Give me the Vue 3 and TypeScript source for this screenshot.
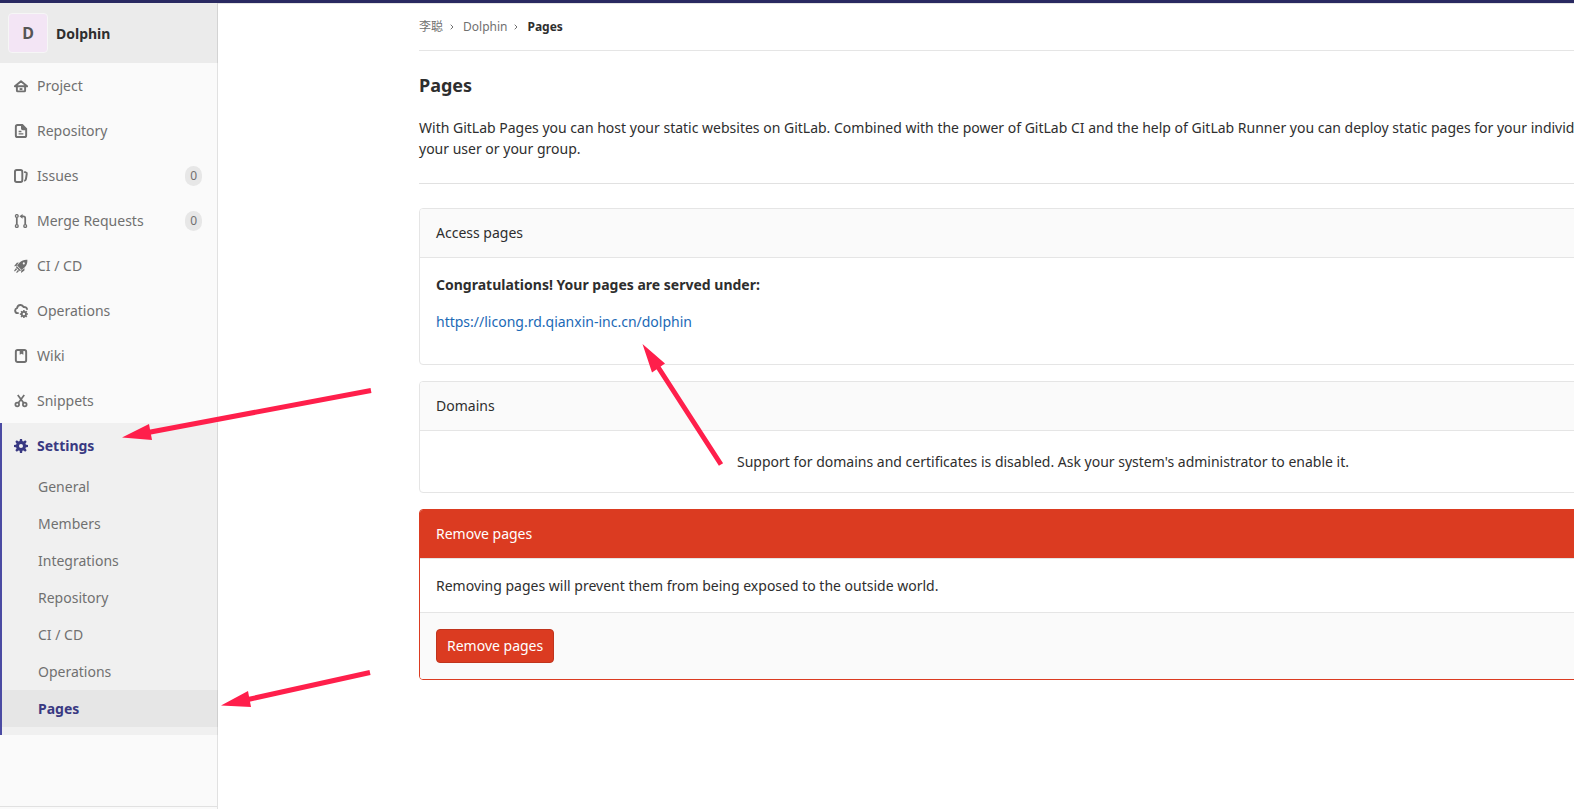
<script setup lang="ts">
interface NavItem {
  label: string
  icon: string
  count?: number
}

const navItems: NavItem[] = [
  { label: 'Project', icon: 'home' },
  { label: 'Repository', icon: 'doc' },
  { label: 'Issues', icon: 'issues', count: 0 },
  { label: 'Merge Requests', icon: 'merge', count: 0 },
  { label: 'CI / CD', icon: 'rocket' },
  { label: 'Operations', icon: 'cloud' },
  { label: 'Wiki', icon: 'book' },
  { label: 'Snippets', icon: 'scissors' },
]

const settingsItems: string[] = [
  'General',
  'Members',
  'Integrations',
  'Repository',
  'CI / CD',
  'Operations',
  'Pages',
]
const currentItem = 'Pages'
const teeth: number[] = [0, 45, 90, 135, 180, 225, 270, 315]
</script>

<template>
  <div class="app">
    <div class="topbar"></div>
    <div class="layout">
      <aside class="sidebar">
        <a class="project" href="#">
          <span class="avatar">D</span>
          <span>Dolphin</span>
        </a>
        <nav class="nav">
          <a v-for="item in navItems" :key="item.label" class="nav-link" href="#">
            <svg class="icon" viewBox="0 0 16 16" aria-hidden="true">
              <g v-if="item.icon === 'home'" class="line">
                <path d="M1 8.300 8 2.500l7 5.800H1z" />
                <path d="M3.300 8.500v4.600c0 .6.400 1 1 1h7.400c.6 0 1-.4 1-1V8.500" />
                <path d="M6.400 11.500h3.200" />
              </g>
              <g v-else-if="item.icon === 'doc'">
                <path
                  fill-rule="evenodd"
                  d="M4 0h6l5 5v8a3 3 0 0 1-3 3H4a3 3 0 0 1-3-3V3a3 3 0 0 1 3-3zm.2 2.200a1 1 0 0 0-1 1v9.600a1 1 0 0 0 1 1h7.600a1 1 0 0 0 1-1V7H10a2 2 0 0 1-2-2V2.200z"
                />
                <path d="M5.300 7.800h3.200v1.500H5.300zM5.300 10.500h5.400V12H5.300z" />
              </g>
              <g v-else-if="item.icon === 'issues'" class="line">
                <rect x="1.100" y="1.100" width="8.400" height="13.800" rx="2" />
                <path d="M11.600 3.200l1.900.6c.8.2 1.200.8 1.100 1.600l-1 6.300c-.1.900-.6 1.400-2 1.700" />
              </g>
              <g v-else-if="item.icon === 'merge'" class="thin">
                <circle cx="3.200" cy="2.300" r="1.600" />
                <circle cx="3.200" cy="13.700" r="1.600" />
                <circle cx="12.800" cy="13.700" r="1.600" />
                <path class="thick" d="M3.200 4v8M12.800 12V4.800c0-1.300-.7-2.100-2-2.100H8.500" />
                <path class="solid" d="M9.800 0v5.400L6.200 2.700z" />
              </g>
              <g v-else-if="item.icon === 'rocket'">
                <path
                  fill-rule="evenodd"
                  d="M15.300.9c.2 3.700-.8 6.400-3 8.500l-3.600 3.200-5.200-5.200L6.700 3.800C9 1.600 11.700.6 15.300.9zm-4.100 2.900a1.200 1.200 0 1 0 0 2.400 1.200 1.200 0 0 0 0-2.400z"
                />
                <path
                  d="M5.500 3.900 3.200 4.200 0 8.200l2.800-.3zM12.100 10.500l-.2 2.700L8 16l.3-2.900zM3.100 8l4.900 4.900-1.300 1.100-4.500-4.500zM2.300 10.300l1.300 1.300L.9 14.200l-.8-.8zM4.600 12.400l1.200 1.200-2.500 2.300-.8-.8z"
                />
              </g>
              <g v-else-if="item.icon === 'cloud'">
                <path
                  class="line"
                  d="M5.400 10.400H4A2.900 2.900 0 0 1 3.500 4.700C4 2.200 5.700 1.100 7.600 1.200c1.500.1 2.600.8 3.200 2.200 2.300-.2 4.100.9 4.200 3.200"
                />
                <g class="thin">
                  <circle class="thick" cx="11.300" cy="11.500" r="2.400" />
                  <path
                    v-for="angle in teeth"
                    :key="angle"
                    class="tooth"
                    d="M11.300 9V6.900"
                    :transform="`rotate(${angle} 11.3 11.5)`"
                  />
                </g>
              </g>
              <g v-else-if="item.icon === 'book'">
                <rect class="line" x="2.100" y="1.100" width="11.800" height="13.800" rx="2" />
                <path d="M6.500 1.500h4.200v5.200L8.600 5.400 6.500 6.700z" />
              </g>
              <g v-else class="thin">
                <circle class="thick" cx="3.700" cy="11.900" r="2.100" />
                <circle class="thick" cx="12.300" cy="11.900" r="2.100" />
                <path class="thick" d="M4.300 1.200l6.800 9M11.700 1.200l-6.800 9" />
              </g>
            </svg>
            <span>{{ item.label }}</span>
            <span v-if="item.count !== undefined" class="badge">{{ item.count }}</span>
          </a>
          <div class="group">
            <a class="nav-link current" href="#">
              <svg class="icon" viewBox="0 0 16 16" aria-hidden="true">
                <circle class="gear" cx="8" cy="8" r="4" />
                <path
                  v-for="angle in teeth"
                  :key="angle"
                  d="M6.300 3.400 6.800 0h2.400l.5 3.400z"
                  :transform="`rotate(${angle} 8 8)`"
                />
              </svg>
              <span>Settings</span>
            </a>
            <a
              v-for="label in settingsItems"
              :key="label"
              class="sub-link"
              :class="{ current: label === currentItem }"
              href="#"
              >{{ label }}</a
            >
          </div>
        </nav>
        <div class="sidebar-foot"></div>
      </aside>

      <main class="main">
        <div class="container">
          <nav class="breadcrumbs" aria-label="Breadcrumb">
            <a href="#">李聪</a>
            <svg viewBox="0 0 8 8" aria-hidden="true"><path d="M2.700 1.700 5 4 2.700 6.300" /></svg>
            <a href="#">Dolphin</a>
            <svg viewBox="0 0 8 8" aria-hidden="true"><path d="M2.700 1.700 5 4 2.700 6.300" /></svg>
            <a class="here" href="#">Pages</a>
          </nav>

          <h1>Pages</h1>
          <p class="intro">
            With GitLab Pages you can host your static websites on GitLab. Combined with the power of
            GitLab CI and the help of GitLab Runner you can deploy static pages for your individual
            projects, your user or your group.
          </p>
          <hr />

          <section class="card">
            <h2>Access pages</h2>
            <div class="card-body access">
              <strong>Congratulations! Your pages are served under:</strong>
              <a href="#">https://licong.rd.qianxin-inc.cn/dolphin</a>
            </div>
          </section>

          <section class="card">
            <h2>Domains</h2>
            <div class="notice">
              Support for domains and certificates is disabled. Ask your system's administrator to
              enable it.
            </div>
          </section>

          <section class="card danger">
            <h2>Remove pages</h2>
            <div class="card-body">
              Removing pages will prevent them from being exposed to the outside world.
            </div>
            <div class="card-foot">
              <button type="button">Remove pages</button>
            </div>
          </section>
        </div>
      </main>
    </div>

    <svg class="arrows" aria-hidden="true">
      <path d="M371 390.500 148 432.500M370 672.500 248 699.500M721 464.500 658 367" />
      <path class="head" d="M122 437.500l27-13.500 3 16zM221 705.500l27-14.500 3 16zM642.500 344l22.500 19.500-13 9z" />
    </svg>
  </div>
</template>

<style>
body {
  margin: 0;
}
</style>

<style scoped>
.app {
  position: relative;
  display: flex;
  flex-direction: column;
  min-height: 100vh;
  overflow: hidden;
  background: #fff;
  color: #2e2e2e;
  font-family: 'Noto Sans', 'Noto Sans CJK SC', sans-serif;
  font-size: 14px;
  line-height: 21px;
}
.app * {
  box-sizing: border-box;
}
a {
  color: #1b69b6;
  text-decoration: none;
}
.topbar {
  height: 3px;
  background: #292961;
}
.layout {
  display: flex;
  flex: 1;
}
.sidebar {
  display: flex;
  flex-direction: column;
  flex: none;
  width: 218px;
  background: #fafafa;
  box-shadow: inset -1px 0 0 #e1e1e1;
}
.project {
  display: flex;
  align-items: center;
  gap: 8px;
  height: 60px;
  padding: 0 8px;
  background: rgba(0, 0, 0, 0.06);
  color: #2e2e2e;
  font-weight: 700;
}
.avatar {
  display: flex;
  align-items: center;
  justify-content: center;
  width: 40px;
  height: 40px;
  border: 1px solid #f6f6f6;
  border-radius: 4px;
  background: #f3e5f5;
  color: #555;
  font-size: 16px;
}
.nav {
  flex: 1;
}
.nav-link {
  display: flex;
  align-items: center;
  gap: 9px;
  height: 45px;
  padding: 0 16px 0 14px;
  color: #707070;
}
.icon {
  width: 14px;
  height: 14px;
  fill: currentColor;
}
.line,
.thin,
.gear {
  fill: none;
  stroke: currentColor;
}
.line {
  stroke-width: 2.2;
  stroke-linejoin: round;
}
.thin {
  stroke-width: 1.5;
}
.thick {
  stroke-width: 2;
}
.tooth {
  stroke-width: 1.8;
}
.gear {
  stroke-width: 3.4;
}
.solid {
  fill: currentColor;
  stroke: none;
}
.badge {
  margin-left: auto;
  padding: 0 5px;
  border-radius: 10px;
  background: #e7e7e7;
  font-size: 12px;
  line-height: 20px;
}
.group {
  padding-bottom: 8px;
  background: rgba(0, 0, 0, 0.04);
  box-shadow: inset 2px 0 0 #4b4ba3;
}
.sub-link {
  display: block;
  padding: 8px 16px 8px 38px;
  color: #707070;
}
.sub-link.current {
  margin-left: 2px;
  padding-left: 36px;
  background: rgba(0, 0, 0, 0.04);
}
.current {
  color: #393982;
  font-weight: 700;
}
.sidebar-foot {
  height: 3px;
  border-top: 1px solid #e1e1e1;
}
.main {
  display: flex;
  flex: 1;
  justify-content: flex-start;
  min-width: 0;
  padding-left: 201px;
  box-shadow: inset 0 1px 0 #e5e5e5;
}
.container {
  flex: none;
  width: 1248px;
}
.breadcrumbs {
  display: flex;
  align-items: center;
  height: 48px;
  border-bottom: 1px solid #e5e5e5;
  font-size: 12px;
}
.breadcrumbs a {
  color: #707070;
}
.breadcrumbs .here {
  color: #2e2e2e;
  font-weight: 700;
}
.breadcrumbs svg {
  width: 8px;
  height: 8px;
  margin: 0 7px 0 5px;
  fill: none;
  stroke: #707070;
  stroke-width: 1;
}
h1 {
  margin: 22px 0 20px;
  font-size: 18px;
  line-height: 24px;
}
.intro {
  margin: 0;
}
hr {
  margin: 24px 0;
  border: 0;
  border-top: 1px solid #e1e1e1;
}
.card {
  margin-bottom: 16px;
  overflow: hidden;
  border: 1px solid #e5e5e5;
  border-radius: 4px;
}
h2 {
  margin: 0;
  padding: 14px 16px;
  border-bottom: 1px solid #e5e5e5;
  background: #fafafa;
  font-size: 14px;
  font-weight: 400;
  line-height: 20px;
}
.card-body {
  padding: 16px;
}
.access {
  display: flex;
  flex-direction: column;
  align-items: flex-start;
  gap: 16px;
  padding-bottom: 32px;
}
.notice {
  padding: 20px;
  text-align: center;
}
.danger {
  border-color: #db3b21;
}
.danger h2 {
  background: #db3b21;
  color: #fff;
}
.card-foot {
  padding: 16px;
  border-top: 1px solid #e5e5e5;
  background: #fafafa;
}
button {
  display: block;
  padding: 5px 10px 6px;
  border: 1px solid #c0341d;
  border-radius: 4px;
  background: #db3b21;
  color: #fff;
  font: inherit;
}
.arrows {
  position: absolute;
  inset: 0;
  width: 100%;
  height: 100%;
  pointer-events: none;
  fill: none;
  stroke: #ff1f4b;
  stroke-width: 5;
}
.head {
  fill: #ff1f4b;
  stroke: none;
}
</style>
